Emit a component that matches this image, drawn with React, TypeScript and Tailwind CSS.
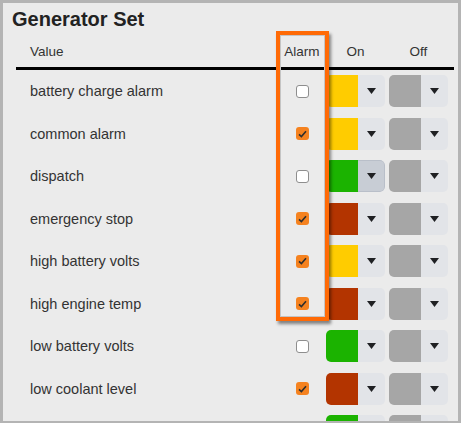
import React from "react";

type Row = { label: string; checked: boolean; on: string; hover?: boolean };

const rows: Row[] = [
  { label: "battery charge alarm", checked: false, on: "#ffcc00" },
  { label: "common alarm", checked: true, on: "#ffcc00" },
  { label: "dispatch", checked: false, on: "#1bb300", hover: true },
  { label: "emergency stop", checked: true, on: "#b33400" },
  { label: "high battery volts", checked: true, on: "#ffcc00" },
  { label: "high engine temp", checked: true, on: "#b33400" },
  { label: "low battery volts", checked: false, on: "#1bb300" },
  { label: "low coolant level", checked: true, on: "#b33400" },
  { label: "", checked: false, on: "#1bb300" },
];

function Caret() {
  return (
    <svg width="9" height="6" viewBox="0 0 9 6">
      <polygon points="0,0 9,0 4.5,6" fill="#1f2023" />
    </svg>
  );
}

function ColorSelect({ color, hover }: { color: string; hover?: boolean }) {
  return (
    <div className="flex h-[32px] w-[59px] overflow-hidden rounded-[5px]">
      <div className="h-full w-[32px]" style={{ backgroundColor: color }} />
      <div
        className={
          hover
            ? "flex h-full flex-1 items-center justify-center rounded-r-[5px] border border-l-0 border-[#b9bfc9] bg-[#c8cdd5]"
            : "flex h-full flex-1 items-center justify-center bg-[#e2e4e8]"
        }
      >
        <Caret />
      </div>
    </div>
  );
}

function Checkbox({ checked }: { checked: boolean }) {
  if (checked) {
    return (
      <div className="flex h-[13px] w-[13px] items-center justify-center rounded-[3px] bg-[#f5821f]">
        <svg width="9" height="8" viewBox="0 0 9 8">
          <path d="M1 4.3 L3.4 6.6 L8 1.2" fill="none" stroke="#2e2e2e" strokeWidth="1.6" />
        </svg>
      </div>
    );
  }
  return <div className="h-[13px] w-[13px] rounded-[3px] border border-[#8e8e8e] bg-white" />;
}

export default function App() {
  return (
    <div className="h-[423px] w-[461px] overflow-hidden bg-[#b4b4b4] pb-[2px] pl-[3px] pr-[3px] pt-[3px]">
      <div
        className="relative h-full w-full overflow-hidden bg-[#ebebeb] text-[#333]"
        style={{ fontFamily: '"Liberation Sans", Arial, sans-serif' }}
      >
        <div className="h-[28px] pl-[9px] pt-[4px] text-[20px] font-bold leading-[24px] text-[#222]">
          Generator Set
        </div>
        <div className="ml-[13px] w-[438px]">
          <div className="flex h-[36px] items-center pt-[6px] text-[13.5px] leading-[16px]">
            <div className="w-[261px] pl-[14px]">Value</div>
            <div className="w-[49px] pl-[1px] text-center">Alarm</div>
            <div className="w-[59px] text-center">On</div>
            <div className="ml-[4px] w-[59px] text-center">Off</div>
          </div>
          <div className="h-[3px] bg-black" />
          {rows.map((r, i) => (
            <div key={i} className="flex h-[42.5px] items-center text-[14.5px]">
              <div className="w-[261px] pl-[14px] pt-[2px]">{r.label}</div>
              <div className="flex w-[49px] justify-center pl-[2px]">
                {r.label && <Checkbox checked={r.checked} />}
              </div>
              <ColorSelect color={r.on} hover={r.hover} />
              <div className="ml-[4px]">
                <ColorSelect color="#a6a6a6" />
              </div>
            </div>
          ))}
        </div>
        <div className="absolute left-[273px] top-[28px] h-[290px] w-[53px] border-[4px] border-[#ff6a06] shadow-[2px_3px_3px_rgba(0,0,0,0.45),inset_0_0_0_1px_#c4c4c4]" />
      </div>
    </div>
  );
}
